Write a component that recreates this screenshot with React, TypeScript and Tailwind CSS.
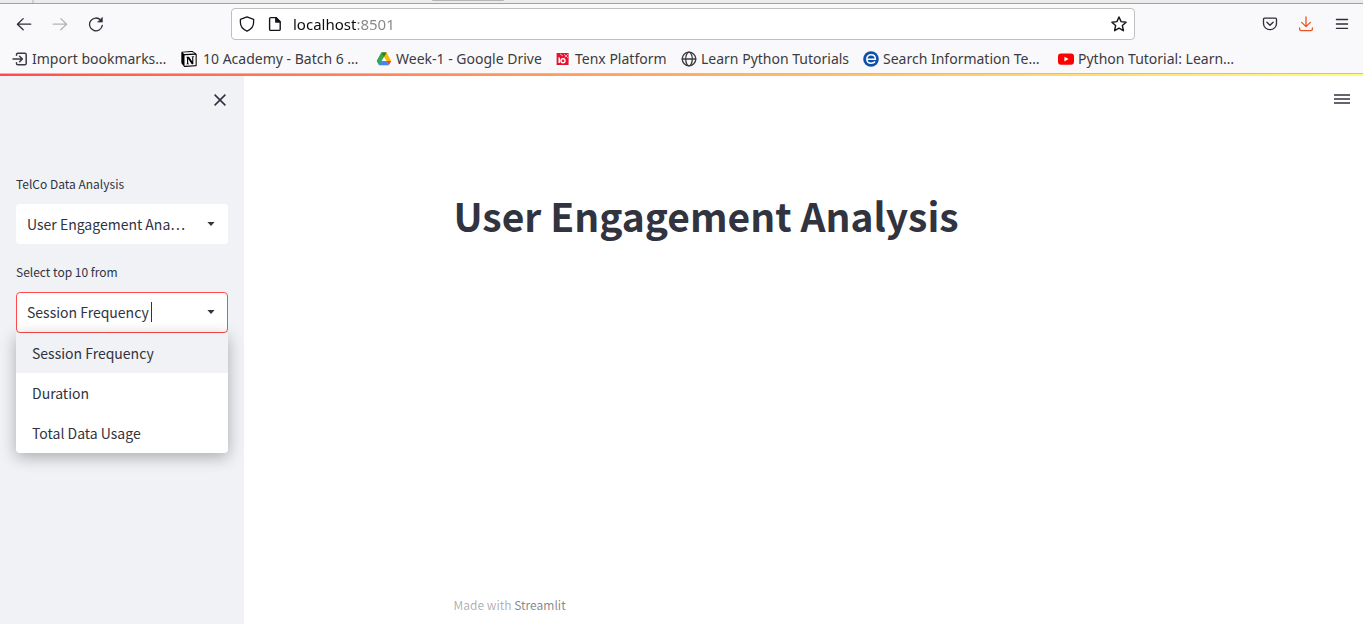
import { useState } from "react";
import type { ReactNode } from "react";
import { SiNotion } from "react-icons/si";

function Stroke({ children, className = "size-4", width = 1.3 }: { children: ReactNode; className?: string; width?: number }) {
  return (
    <svg
      viewBox="0 0 16 16"
      className={`shrink-0 ${className}`}
      fill="none"
      stroke="currentColor"
      strokeWidth={width}
      strokeLinecap="round"
      strokeLinejoin="round"
      aria-hidden="true"
    >
      {children}
    </svg>
  );
}

function ImportIcon() {
  return (
    <Stroke width={1.5}>
      <path d="M4.5 4.2V3.6Q4.5 2.2 5.9 2.2H12.8Q14.2 2.2 14.2 3.6V12.4Q14.2 13.8 12.8 13.8H5.9Q4.5 13.8 4.5 12.4V11.8" />
      <path d="M1 8H10.2M7.6 5.2L10.4 8L7.6 10.8" />
    </Stroke>
  );
}

function DriveIcon() {
  return (
    <svg viewBox="0 0 16 16" className="size-4 shrink-0" aria-hidden="true">
      <path fill="#34a853" d="M5.4 1.5H10.6L8 6L3.3 14.2L.8 10Z" />
      <path fill="#ffba00" d="M5.4 1.5H10.6L15.2 10H10.3Z" />
      <path fill="#34a853" d="M5.4 1.5L8 6L5.7 10L3.1 14.2L.8 10Z" />
      <path fill="#ea4335" d="M10.3 10H15.2L12.9 14.2Z" />
      <path fill="#4285f4" d="M5.4 10H10.4L12.9 14.2H3.1Z" />
      <path fill="#188038" d="M5.4 1.5H10.6L8 6Z" />
      <path fill="#fff" d="M8 6L10.3 10H5.7Z" />
    </svg>
  );
}

function TenxIcon() {
  return (
    <svg viewBox="0 0 16 16" className="size-4 shrink-0" aria-hidden="true">
      <path fill="#fff" d="M0 0H16V16H0Z" />
      <path fill="#e8112d" d="M1.6 2H13.6V14H1.6Z" />
      <path stroke="#fff" strokeWidth="1.5" d="M4.2 6.4V12" />
      <circle cx="8" cy="9.7" r="2" fill="none" stroke="#fff" strokeWidth="1.4" />
      <path stroke="#fff" strokeWidth=".8" d="M5 3L8 5M9 3.2L13 6.8M13 3L9.6 6.4" opacity=".8" />
    </svg>
  );
}

function GlobeIcon() {
  return (
    <Stroke>
      <circle cx="8" cy="8" r="6.8" />
      <ellipse cx="8" cy="8" rx="3.3" ry="6.8" />
      <path d="M1.2 8H14.8" />
    </Stroke>
  );
}

function SearchInfoIcon() {
  return (
    <svg viewBox="0 0 16 16" className="size-4 shrink-0" aria-hidden="true">
      <circle cx="8" cy="8" r="7.8" fill="#0e50a8" />
      <path
        d="M3.4 8.2H12.4C12.4 5.4 10.8 3.7 8.1 3.7C5.4 3.7 3.8 5.6 3.8 8C3.8 10.6 5.6 12.3 8.2 12.3C10 12.3 11.3 11.6 12 10.5"
        fill="none"
        stroke="#fff"
        strokeWidth="1.5"
      />
    </svg>
  );
}

function YoutubeIcon() {
  return (
    <svg viewBox="0 0 16 16" className="size-4 shrink-0" aria-hidden="true">
      <rect x="0" y="2.4" width="16" height="11.4" rx="3" fill="#f00" />
      <path d="M6.4 5.8L10.5 8.1L6.4 10.4Z" fill="#fff" />
    </svg>
  );
}

const bookmarks: { label: string; icon: ReactNode; className: string }[] = [
  { label: "Import bookmarks…", icon: <ImportIcon />, className: "w-[169px] gap-1" },
  { label: "10 Academy - Batch 6 …", icon: <SiNotion className="size-4 shrink-0 text-black" />, className: "w-[195px] gap-1.5" },
  { label: "Week-1 - Google Drive", icon: <DriveIcon />, className: "w-[179px] gap-1" },
  { label: "Tenx Platform", icon: <TenxIcon />, className: "w-[126px] gap-1" },
  { label: "Learn Python Tutorials", icon: <GlobeIcon />, className: "w-[182px] gap-1" },
  { label: "Search Information Te…", icon: <SearchInfoIcon />, className: "w-[195px] gap-1" },
  { label: "Python Tutorial: Learn…", icon: <YoutubeIcon />, className: "w-[190px] gap-1" },
];

function ToolButton({ label, className = "text-[#2f2e36]", children }: { label: string; className?: string; children: ReactNode }) {
  return (
    <button type="button" aria-label={label} className={`flex size-9 shrink-0 items-center justify-center ${className}`}>
      {children}
    </button>
  );
}

function BrowserChrome() {
  return (
    <header className="border-b border-[#c0c0c4] bg-[#f9f9fb] font-['Noto_Sans',sans-serif]">
      <div className="h-1 border-b border-[#a2a2a4] bg-[#ebebeb]">
        <div className="flex h-full">
          <div className="ml-8 h-full w-0.5 bg-[#d0d0d0]" />
          <div className="ml-[398px] h-px w-[72px] rounded-b bg-[#b5b5b5]" />
        </div>
      </div>
      <div className="flex h-10 items-center pr-[3px] pl-1.5">
        <ToolButton label="Back">
          <Stroke>
            <path d="M14.7 8.2H1.5M7.2 2.6L1.4 8.2L7.2 13.8" />
          </Stroke>
        </ToolButton>
        <ToolButton label="Forward" className="text-[#b4b4b6]">
          <Stroke>
            <path d="M1.3 8.2H14.5M8.8 2.6L14.6 8.2L8.8 13.8" />
          </Stroke>
        </ToolButton>
        <ToolButton label="Reload">
          <Stroke>
            <path d="M12.6 4A6.4 6.4 0 1 0 14.3 9.4" />
            <path d="M14.4 1.6V6.1H9.9Z" fill="currentColor" strokeWidth=".6" />
          </Stroke>
        </ToolButton>
        <div className="mx-[117px] flex h-8 min-w-0 flex-1 items-center rounded border border-[#bfbfc2] bg-white px-[7px] text-[#15141a]">
          <Stroke>
            <path d="M8 .9L14.6 3.3V6.6C14.6 10.4 12 13.6 8 15.1C4 13.6 1.4 10.4 1.4 6.6V3.3Z" />
          </Stroke>
          <Stroke className="ml-3 size-4" width={1.4}>
            <path d="M3.8 1.6H9L13.2 5.8V13.2Q13.2 14.4 12 14.4H3.8Q2.6 14.4 2.6 13.2V2.8Q2.6 1.6 3.8 1.6Z" />
            <path d="M8.8 1.8V6H13Z" fill="currentColor" />
          </Stroke>
          <input
            aria-label="Address"
            defaultValue="localhost:8501"
            className="ml-2.5 h-6 min-w-0 flex-1 bg-[linear-gradient(90deg,#0c0c0d_63px,#85858a_63px)] bg-clip-text text-[15px] text-transparent outline-none"
          />
          <button type="button" aria-label="Bookmark this page">
            <Stroke width={1.4}>
              <path d="M8 1L10.1 5.6L15.1 6.2L11.4 9.6L12.4 14.7L8 12.2L3.6 14.7L4.6 9.6L.9 6.2L5.9 5.6Z" />
            </Stroke>
          </button>
        </div>
        <ToolButton label="Save to Pocket">
          <Stroke>
            <path d="M2.6 2.2H13.4Q14.5 2.2 14.5 3.3V7.4A6.5 6.3 0 0 1 1.5 7.4V3.3Q1.5 2.2 2.6 2.2Z" />
            <path d="M4.9 6.2L8 9.2L11.1 6.2" />
          </Stroke>
        </ToolButton>
        <ToolButton label="Downloads" className="text-[#e95420]">
          <Stroke>
            <path d="M8 .8V10.4M3.6 6.4L8 10.6L12.4 6.4M1.6 12V13Q1.6 14.6 3.2 14.6H12.8Q14.4 14.6 14.4 13V12" />
          </Stroke>
        </ToolButton>
        <ToolButton label="Application menu">
          <Stroke>
            <path d="M2.4 3.5H13.6M2.4 8H13.6M2.4 12.3H13.6" />
          </Stroke>
        </ToolButton>
      </div>
      <nav aria-label="Bookmarks" className="flex h-[29px] overflow-hidden pl-3 text-sm text-[#3c3b42]">
        {bookmarks.map((b) => (
          <a key={b.label} href="#" className={`flex shrink-0 items-center whitespace-nowrap ${b.className}`}>
            {b.icon}
            {b.label}
          </a>
        ))}
      </nav>
    </header>
  );
}

function Caret() {
  return (
    <svg viewBox="0 0 8 4" className="pointer-events-none h-1 w-2 shrink-0" aria-hidden="true">
      <path d="M.4 0H7.6L4 4Z" fill="#31333f" />
    </svg>
  );
}

const options = ["Session Frequency", "Duration", "Total Data Usage"];

function Sidebar() {
  const [metric, setMetric] = useState(options[0]);
  return (
    <aside className="w-[244px] shrink-0 bg-[#f0f2f6] px-4 pt-3">
      <div className="flex h-6 items-center justify-end">
        <button type="button" aria-label="Close sidebar" className="flex size-4 items-center justify-center">
          <svg viewBox="0 0 12 12" className="size-3" stroke="#31333f" strokeWidth="1.6" aria-hidden="true">
            <path d="M.6 .6L11.4 11.4M11.4 .6L.6 11.4" />
          </svg>
        </button>
      </div>

      <label htmlFor="page" className="mt-[62px] block text-xs leading-5">
        TelCo Data Analysis
      </label>
      <div className="mt-2.5 flex h-10 items-center rounded bg-white pr-[13px] pl-[11px]">
        <select
          id="page"
          className="mr-5 h-full min-w-0 flex-1 appearance-none truncate bg-transparent text-sm outline-none [font-variant-east-asian:proportional-width]"
        >
          <option>User Engagement Analysis</option>
        </select>
        <Caret />
      </div>

      <label htmlFor="metric" className="mt-[18px] block text-xs leading-5">
        Select top 10 from
      </label>
      <div className="relative mt-2.5">
        <div className="flex h-[41px] items-center rounded border border-[#ff4b4b] bg-white pr-3 pb-px pl-2.5">
          <input
            id="metric"
            role="combobox"
            aria-expanded="true"
            aria-controls="metric-options"
            value={metric}
            onChange={(e) => setMetric(e.target.value)}
            className="field-sizing-content max-w-full bg-transparent text-sm caret-transparent outline-none"
          />
          <span className="ml-0.5 h-5 w-px bg-[#31333f]" />
          <span className="flex-1" />
          <Caret />
        </div>
        <ul
          id="metric-options"
          role="listbox"
          aria-label="Select top 10 from"
          className="absolute inset-x-0 top-full overflow-hidden rounded-b bg-white text-sm shadow-[0_4px_16px_rgba(0,0,0,0.3)]"
        >
          {options.map((o) => (
            <li
              key={o}
              role="option"
              aria-selected={o === metric}
              onClick={() => setMetric(o)}
              className="flex h-10 cursor-pointer items-center px-4 aria-selected:bg-[#f0f2f6]"
            >
              {o}
            </li>
          ))}
        </ul>
      </div>
    </aside>
  );
}

export default function App() {
  return (
    <div className="flex min-h-screen flex-col bg-white">
      <BrowserChrome />
      <div className="h-0.5 bg-linear-to-r from-[#ff4b4b] to-[#fffd80]" />
      <div className="flex flex-1 font-['Noto_Sans_CJK_SC',sans-serif] text-[#31333f]">
        <Sidebar />
        <main className="flex min-w-0 flex-1 flex-col">
          <div className="flex justify-end pt-[15px] pr-3">
            <button type="button" aria-label="Main menu">
              <svg viewBox="0 0 18 16" className="h-4 w-[18px]" stroke="#31333f" strokeWidth="1.5" aria-hidden="true">
                <path d="M1 4H17M1 8H17M1 12H17" />
              </svg>
            </button>
          </div>
          <div className="mx-auto flex w-full max-w-[700px] flex-1 flex-col justify-between">
            <h1 className="mt-[82px] text-[39px] leading-[52px] font-bold">User Engagement Analysis</h1>
            <footer className="pb-[9px] text-xs leading-5 text-[#31333f]/40">
              Made with{" "}
              <a href="#" className="text-[#31333f]/60">
                Streamlit
              </a>
            </footer>
          </div>
        </main>
      </div>
    </div>
  );
}
